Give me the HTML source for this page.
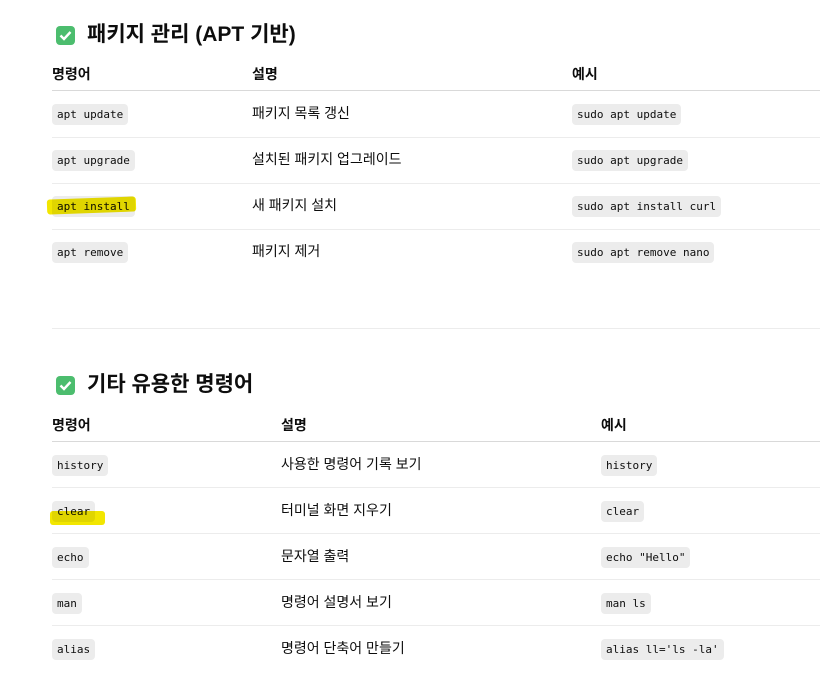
<!DOCTYPE html>
<html><head><meta charset="utf-8"><style>
body{margin:0;width:837px;height:679px;background:#fff;position:relative;overflow:hidden;font-family:"Liberation Sans","Noto Sans CJK KR",sans-serif;color:#0d0d0d}
.a{position:absolute;white-space:nowrap}
.t{font-size:14px;line-height:18px}
.h{font-size:14px;font-weight:bold;line-height:18px}
.c{font-family:"DejaVu Sans Mono","Noto Sans CJK KR",monospace;font-size:11px;background:#ececec;border-radius:4px;padding:4px 5px;line-height:13px}
.ln{position:absolute;left:52px;width:768px;height:1px;background:#ececec}
.title{font-size:21px;font-weight:bold;line-height:24px}
.chk{position:absolute;width:19px;height:19px;border-radius:4px;background:#4cbd6e}
.hl{position:absolute;background:#f2e600;border-radius:3px;mix-blend-mode:multiply;z-index:2}
</style></head><body>
<div class="chk" style="left:56px;top:26px"><svg width="19" height="19"><path d="M4.5 9.5l3.5 3.5 6.5-7" stroke="#fff" stroke-width="2.4" fill="none"/></svg></div>
<div class="a title" style="left:87px;top:23px">패키지 관리 (APT 기반)</div>
<div class="a h" style="left:52px;top:65px">명령어</div><div class="a h" style="left:252px;top:65px">설명</div><div class="a h" style="left:572px;top:65px">예시</div>
<div class="ln" style="top:90px;background:#d9d9d9"></div>
<div class="hl" style="left:47px;top:198px;width:89px;height:15px;transform:rotate(-2deg)"></div>
<div class="a c" style="left:52px;top:104px">apt update</div><div class="a t" style="left:252px;top:104px">패키지 목록 갱신</div><div class="a c" style="left:572px;top:104px">sudo apt update</div>
<div class="ln" style="top:137px"></div>
<div class="a c" style="left:52px;top:150px">apt upgrade</div><div class="a t" style="left:252px;top:150px">설치된 패키지 업그레이드</div><div class="a c" style="left:572px;top:150px">sudo apt upgrade</div>
<div class="ln" style="top:183px"></div>
<div class="a c" style="left:52px;top:196px">apt install</div><div class="a t" style="left:252px;top:196px">새 패키지 설치</div><div class="a c" style="left:572px;top:196px">sudo apt install curl</div>
<div class="ln" style="top:229px"></div>
<div class="a c" style="left:52px;top:242px">apt remove</div><div class="a t" style="left:252px;top:242px">패키지 제거</div><div class="a c" style="left:572px;top:242px">sudo apt remove nano</div>
<div class="ln" style="top:328px"></div>
<div class="chk" style="left:56px;top:376px"><svg width="19" height="19"><path d="M4.5 9.5l3.5 3.5 6.5-7" stroke="#fff" stroke-width="2.4" fill="none"/></svg></div>
<div class="a title" style="left:87px;top:373px">기타 유용한 명령어</div>
<div class="a h" style="left:52px;top:416px">명령어</div><div class="a h" style="left:281px;top:416px">설명</div><div class="a h" style="left:601px;top:416px">예시</div>
<div class="ln" style="top:441px;background:#d9d9d9"></div>
<div class="a c" style="left:52px;top:455px">history</div><div class="a t" style="left:281px;top:455px">사용한 명령어 기록 보기</div><div class="a c" style="left:601px;top:455px">history</div>
<div class="ln" style="top:487px"></div>
<div class="a c" style="left:52px;top:501px">clear</div><div class="hl" style="left:50px;top:511px;width:55px;height:14px"></div><div class="a t" style="left:281px;top:501px">터미널 화면 지우기</div><div class="a c" style="left:601px;top:501px">clear</div>
<div class="ln" style="top:533px"></div>
<div class="a c" style="left:52px;top:547px">echo</div><div class="a t" style="left:281px;top:547px">문자열 출력</div><div class="a c" style="left:601px;top:547px">echo "Hello"</div>
<div class="ln" style="top:579px"></div>
<div class="a c" style="left:52px;top:593px">man</div><div class="a t" style="left:281px;top:593px">명령어 설명서 보기</div><div class="a c" style="left:601px;top:593px">man ls</div>
<div class="ln" style="top:625px"></div>
<div class="a c" style="left:52px;top:639px">alias</div><div class="a t" style="left:281px;top:639px">명령어 단축어 만들기</div><div class="a c" style="left:601px;top:639px">alias ll='ls -la'</div>
</body></html>
